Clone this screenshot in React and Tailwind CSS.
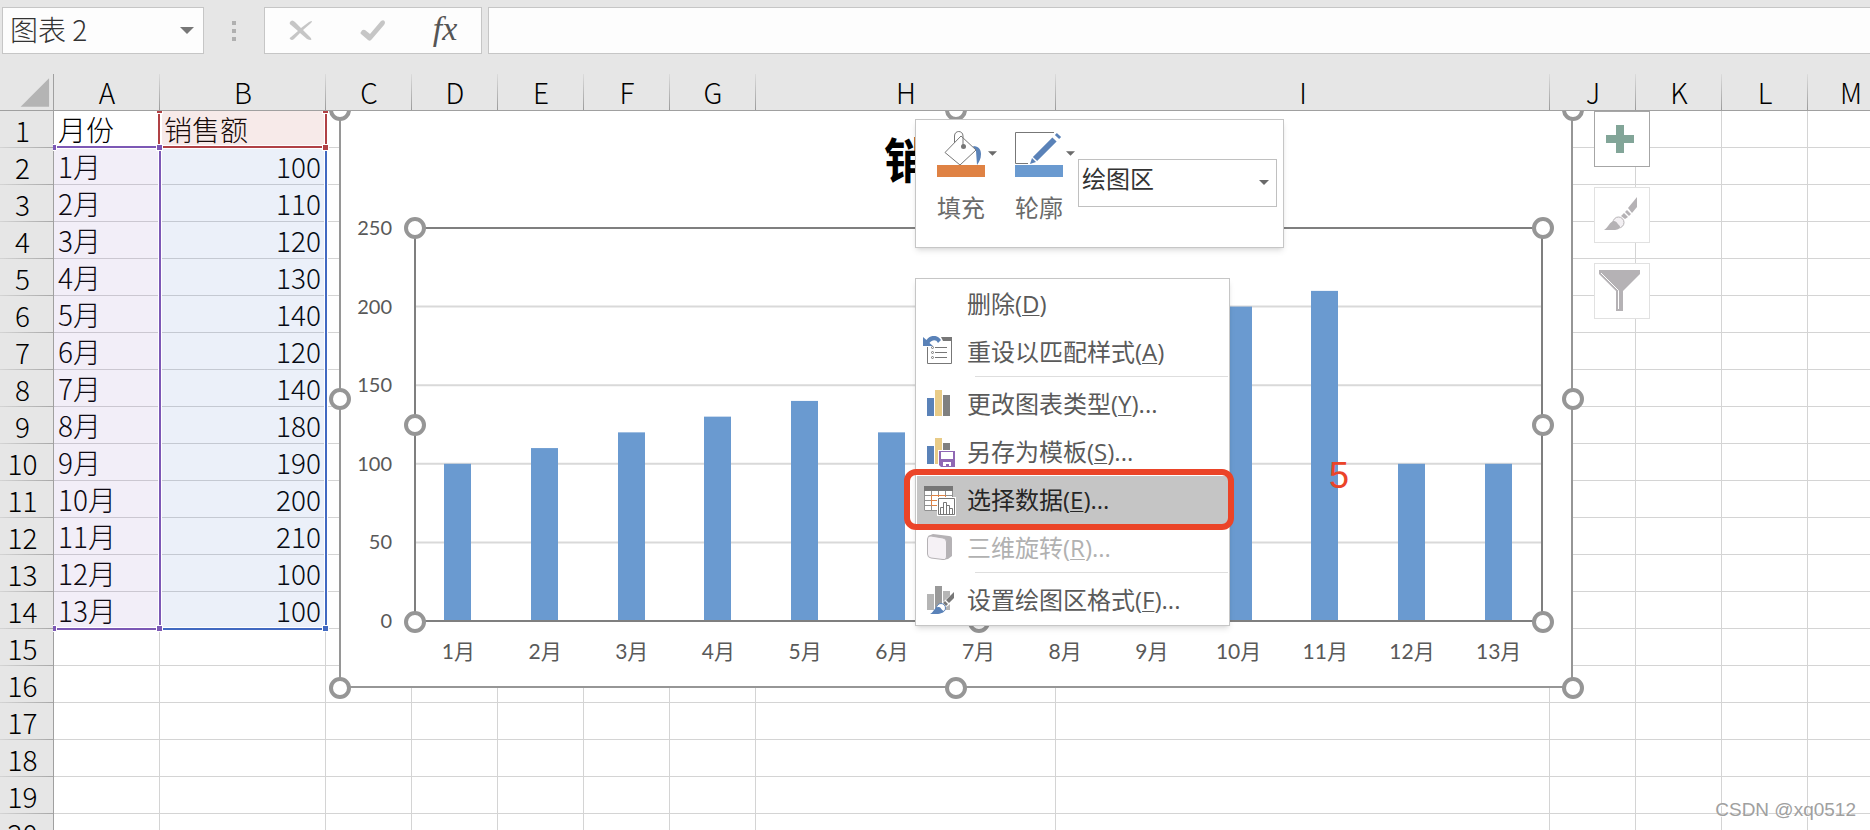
import React, { useState } from 'react';
import clsx from 'clsx';

const columns = [
  { name: 'A', width: 'min-w-[106px]' },
  { name: 'B', width: 'min-w-[166px]' },
  { name: 'C', width: 'min-w-[86px]' },
  { name: 'D', width: 'min-w-[86px]' },
  { name: 'E', width: 'min-w-[86px]' },
  { name: 'F', width: 'min-w-[86px]' },
  { name: 'G', width: 'min-w-[86px]' },
  { name: 'H', width: 'min-w-[300px]' },
  { name: 'I', width: 'min-w-[494px]' },
  { name: 'J', width: 'min-w-[86px]' },
  { name: 'K', width: 'min-w-[86px]' },
  { name: 'L', width: 'min-w-[86px]' },
  { name: 'M', width: 'min-w-[86px]' }
];

const sales = [100, 110, 120, 130, 140, 120, 140, 180, 190, 200, 210, 100, 100];

const rows = [
  ['月份', '销售额'],
  ...sales.map((value, i) => [`${i + 1}月`, value]),
  ...Array.from({ length: 6 }, () => ['', ''])
];

// Plot area in sheet coordinates
const plot = { left: 415, right: 1542, top: 228, bottom: 621, max: 250 };

const Caret = ({ className }) => (
  <svg viewBox="0 0 10 5" className={className} aria-hidden="true">
    <path d="M0 0H10L5 5Z" fill="currentColor" />
  </svg>
);

const FormulaBar = () => {
  const [name, setName] = useState('图表 2');
  const [formula, setFormula] = useState('');

  return (
    <div className="flex h-[74px] shrink-0 items-start pt-[7px] pl-[2px]">
      <div className="flex h-[47px] w-[202px] items-center border border-[#c6c6c6] bg-[#fdfdfd] pr-[9px] pl-[7px]">
        <input
          aria-label="名称框"
          value={name}
          onChange={(e) => setName(e.target.value)}
          className="h-full min-w-0 flex-1 bg-transparent pb-1 text-[28px] font-light text-[#333] outline-none"
        />
        <button type="button" aria-label="展开名称框" className="text-[#777]">
          <Caret className="h-[7px] w-[14px]" />
        </button>
      </div>

      <div className="flex h-[47px] w-[60px] flex-col items-center justify-center gap-1">
        <span className="size-1 bg-[#b0b0b0]" />
        <span className="size-1 bg-[#b0b0b0]" />
        <span className="size-1 bg-[#b0b0b0]" />
      </div>

      <div className="mr-[6px] flex h-[47px] w-[218px] border border-[#c6c6c6] bg-[#fdfdfd]">
        <button type="button" aria-label="取消" className="flex w-[72px] items-center justify-center">
          <svg viewBox="0 0 24 21" className="h-[21px] w-6">
            <path
              d="M1 2Q3-1 6 2L12 8L20 2Q22 1 23 1Q23 2 22 3L14 10L21 17Q23 19 22 20Q20 20 18 19L11 13L5 19Q3 21 1 19Q0 18 2 17L9 11L2 5Q0 4 1 2Z"
              fill="#c6c6c6"
            />
          </svg>
        </button>
        <button type="button" aria-label="输入" className="flex w-[72px] items-center justify-center">
          <svg viewBox="0 0 26 21" className="h-[21px] w-[26px]">
            <path
              d="M1 12Q2 9 5 10L10 14L21 1Q24-1 25 2Q25 4 24 5L12 19Q10 22 8 20L1 14Q0 13 1 12Z"
              fill="#c6c6c6"
            />
          </svg>
        </button>
        <button
          type="button"
          aria-label="插入函数"
          className="flex w-[72px] items-center justify-center pb-1 font-['Liberation_Serif',serif] text-[34px] leading-none text-[#555] italic"
        >
          fx
        </button>
      </div>

      <input
        aria-label="编辑栏"
        value={formula}
        onChange={(e) => setFormula(e.target.value)}
        className="h-[47px] min-w-0 flex-1 border border-r-0 border-[#c6c6c6] bg-[#fdfdfd] px-2 text-[28px] outline-none"
      />
    </div>
  );
};

const Grid = () => (
  <table className="w-max border-separate border-spacing-0 text-[28px] leading-[36px] font-light text-black">
    <thead>
      <tr className="h-[37px]">
        <th className="min-w-[54px] border-r border-b border-[#a0a0a0] bg-[#e6e6e6] p-0">
          <svg viewBox="0 0 54 36" className="block h-9 w-[53px]" aria-hidden="true">
            <path d="M50 4V33H21Z" fill="#b4b4b4" />
          </svg>
        </th>
        {columns.map((col) => (
          <th
            key={col.name}
            scope="col"
            className={clsx(
              'h-[37px] border-b border-[#a0a0a0] bg-[#e6e6e6] bg-[linear-gradient(to_bottom,#dcdcdc,#9b9b9b)] bg-[length:1px_100%] bg-right bg-no-repeat p-0 text-center font-light',
              col.width
            )}
          >
            {col.name}
          </th>
        ))}
      </tr>
    </thead>
    <tbody>
      {rows.map(([month, value], i) => (
        <tr key={i} className="h-[37px]">
          <th
            scope="row"
            className="h-[37px] border-r border-[#a0a0a0] bg-[#e6e6e6] bg-[linear-gradient(to_right,#d4d4d4,#a8a8a8)] bg-[length:100%_1px] bg-bottom bg-no-repeat p-0 pr-2 text-center font-light"
          >
            {i + 1}
          </th>
          {columns.map((col) => (
            <td
              key={col.name}
              className={clsx(
                'h-[37px] border-r border-b border-[#d4d4d4] bg-white p-0 px-1 whitespace-nowrap',
                col.name === 'B' && i > 0 && 'text-right'
              )}
            >
              {col.name === 'A' && month}
              {col.name === 'B' && value}
            </td>
          ))}
        </tr>
      ))}
    </tbody>
  </table>
);

const RangeHighlights = () => (
  <svg viewBox="0 111 340 530" className="absolute top-0 left-0 h-[530px] w-[340px]" aria-hidden="true">
    <rect x="54" y="148" width="105" height="480" fill="#7c5cb8" opacity="0.1" />
    <rect x="161" y="148" width="164" height="480" fill="#3f6fc4" opacity="0.1" />
    <rect x="161" y="111" width="164" height="36" fill="#c0504d" opacity="0.12" />

    {/* White halo under the range borders */}
    <path d="M54 147H326M54 629H326M160 111V629M326 111V629" stroke="#fff" strokeWidth="4" fill="none" />

    <path d="M160 147V629M326 147V629H160" stroke="#4169c1" strokeWidth="2" fill="none" />
    <path d="M159 111V147H326V111" stroke="#b04145" strokeWidth="2" fill="none" />
    <path d="M54 147H160V629H54" stroke="#7c58b5" strokeWidth="2" fill="none" />

    <g stroke="#fff" strokeWidth="1">
      <rect x="156.5" y="108.5" width="6" height="5" fill="#b04145" />
      <rect x="322.5" y="108.5" width="6" height="5" fill="#b04145" />
      <rect x="322.5" y="144.5" width="6" height="6" fill="#b04145" />
      <rect x="156.5" y="144.5" width="6" height="6" fill="#7c58b5" />
      <rect x="156.5" y="625.5" width="6" height="6" fill="#7c58b5" />
      <rect x="322.5" y="625.5" width="6" height="6" fill="#4169c1" />
      <path d="M53 144.5H56.5V150.5H53M53 625.5H56.5V631.5H53" fill="#7c58b5" />
    </g>
  </svg>
);

const Chart = () => {
  const { left, right, top, bottom, max } = plot;
  const slot = (right - left) / sales.length;
  const yOf = (value) => bottom - (value / max) * (bottom - top);

  const handles = [
    [340, 110], [956, 110], [1573, 110],
    [340, 399], [1573, 399],
    [340, 688], [956, 688], [1573, 688],
    [415, 228], [1543, 228],
    [415, 425], [1543, 425],
    [415, 622], [979, 622], [1543, 622]
  ];

  return (
    <svg
      viewBox="328 98 1258 602"
      className="absolute top-[-13px] left-[328px] h-[602px] w-[1258px] font-[Lato,'Noto_Sans_CJK_SC',sans-serif]"
      role="img"
      aria-label="销售额"
    >
      <rect x="340" y="98" width="1232" height="589" fill="#fff" stroke="#969696" strokeWidth="2" />

      <text x="956" y="178" textAnchor="middle" className="text-[48px] font-bold">
        销售额
      </text>

      {[50, 100, 150, 200].map((tick) => (
        <path key={tick} d={`M${left} ${yOf(tick)}H${right}`} stroke="#d9d9d9" strokeWidth="2" />
      ))}
      {[0, 50, 100, 150, 200, 250].map((tick) => (
        <text key={tick} x="392" y={yOf(tick) + 7} textAnchor="end" fill="#595959" className="text-[20px]">
          {tick}
        </text>
      ))}

      {sales.map((value, i) => (
        <React.Fragment key={i}>
          <rect
            x={Math.floor(left + slot * (i + 0.5) - 13.5)}
            y={yOf(value)}
            width="27"
            height={bottom - yOf(value)}
            fill="#6a9ad0"
          />
          <text x={left + slot * (i + 0.5)} y="659" textAnchor="middle" fill="#595959" className="text-[21px]">
            {i + 1}月
          </text>
        </React.Fragment>
      ))}

      <rect x={left} y={top} width={right - left} height={bottom - top} fill="none" stroke="#7f7f7f" strokeWidth="2" />

      {handles.map(([x, y]) => (
        <circle key={`${x}-${y}`} cx={x} cy={y} r="9" fill="#fff" stroke="#969696" strokeWidth="4" />
      ))}
    </svg>
  );
};

const ChartButtons = () => (
  <div className="absolute top-0 left-[1594px] flex flex-col gap-5">
    <button type="button" aria-label="图表元素" className="size-14 border border-[#a6a6a6] bg-white">
      <svg viewBox="1 1 54 54" className="size-full">
        <path d="M24 14H32V24H42V32H32V42H24V32H14V24H24Z" transform="translate(-2 0)" fill="#82a598" />
      </svg>
    </button>
    <button type="button" aria-label="图表样式" className="size-14 border border-[#e1e1e1] bg-white">
      <svg viewBox="1 1 54 54" className="size-full">
        <path d="M43 10V20L38 26L34 21Z" fill="#b5b2b5" />
        <path d="M33 23L37 27L35 29L31 25ZM30 26L34 30L31 32L27 29Z" fill="#b5b2b5" />
        <circle cx="24.5" cy="35.5" r="5.5" fill="#f3f0f3" stroke="#b5b2b5" />
        <path d="M10 43C14 41 16 34 20 34C23 34 24 38 26 39C26 42 23 43 20 43Z" fill="#b5b2b5" />
      </svg>
    </button>
    <button type="button" aria-label="图表筛选器" className="size-14 border border-[#e1e1e1] bg-white">
      <svg viewBox="1 1 54 54" className="size-full">
        <path d="M5 7H46V11L29 28V48H22V28L5 11Z" fill="#b5b2b5" />
        <path d="M7 10L24.5 27.5V46" fill="none" stroke="#fff" />
      </svg>
    </button>
  </div>
);

const FillIcon = () => (
  <svg viewBox="0 0 48 46" className="h-[46px] w-12">
    <path d="M36 15C42 15 44 19 44 23C44 28 42 31 40 34L39 20Z" fill="#5a82b8" />
    <path d="M8 21.5L24 5L39 19L23 34Z" fill="#fff" stroke="#777" />
    <path d="M17.5 12V5C17.5-1 26-1 26 5V15" fill="none" stroke="#777" />
    <circle cx="26.5" cy="15.5" r="2.5" fill="#777" />
    <path d="M0 34H48V46H0Z" fill="#df8244" />
  </svg>
);

const OutlineIcon = () => (
  <svg viewBox="0 0 48 46" className="h-[46px] w-12">
    <path d="M13 32.5H0.5V1.5H39" fill="none" stroke="#777" />
    <path d="M15 33L17 27L21 31Z" fill="#5a82b8" />
    <path d="M20 28L39.5 8.5M42 6L44 4" stroke="#5a82b8" strokeWidth="6" />
    <path d="M0 34H48V46H0Z" fill="#6a9ad0" />
  </svg>
);

const MiniToolbar = () => (
  <div className="absolute top-2 left-[915px] flex h-[129px] w-[369px] border border-[#c6c6c6] bg-white pt-[11px] pl-[21px] shadow-md">
    <button type="button" className="flex w-[78px] flex-col items-start text-[#6a6a6a]">
      <span className="flex">
        <FillIcon />
        <Caret className="mt-5 ml-[3px] h-[5px] w-[9px]" />
      </span>
      <span className="mt-[10px] text-[24px] leading-[40px]">填充</span>
    </button>
    <button type="button" className="flex w-[62px] flex-col items-start text-[#6a6a6a]">
      <span className="flex">
        <OutlineIcon />
        <Caret className="mt-5 ml-[3px] h-[5px] w-[9px]" />
      </span>
      <span className="mt-[10px] text-[24px] leading-[40px]">轮廓</span>
    </button>
    <div className="relative mt-7 ml-[1px] h-12 w-[199px]">
      <select
        aria-label="图表元素"
        defaultValue="plot"
        className="size-full appearance-none border border-[#c0c0c0] bg-white pb-[10px] pl-[3px] text-[24px] text-[#333] outline-none"
      >
        <option value="plot">绘图区</option>
        <option value="chart">图表区</option>
        <option value="title">图表标题</option>
      </select>
      <Caret className="pointer-events-none absolute top-[21px] right-2 h-[5px] w-[10px] text-[#6a6a6a]" />
    </div>
  </div>
);

const ResetIcon = () => (
  <>
    <path d="M5.5 11V27.5H29.5V1.5H20" fill="none" stroke="#777" />
    <path d="M19 1H30V5H21Z" fill="#777" />
    <path d="M13 11.5H25M13 16.5H25M13 21.5H25" stroke="#777" />
    <path d="M1 1V10H11L7.5 7C10 4 14 3 16 7L19 4C15-2 8-1 4.5 4Z" fill="#5a82b8" />
    <circle cx="10.5" cy="11.5" r="1" fill="none" stroke="#777" />
    <circle cx="10.5" cy="16.5" r="1" fill="none" stroke="#777" />
    <circle cx="10.5" cy="21.5" r="1" fill="none" stroke="#777" />
  </>
);

const ChartTypeIcon = () => (
  <>
    <path d="M5 10H12V28H5Z" fill="#5a82b8" />
    <path d="M13 2H20V28H13Z" fill="#e8cb87" />
    <path d="M21 7H28V28H21Z" fill="#808080" />
  </>
);

const TemplateIcon = () => (
  <>
    <ChartTypeIcon />
    <path d="M16 14H34V32H16Z" fill="#fff" />
    <path d="M17 15H33V31H19L17 29Z" fill="#9068b4" />
    <path d="M19 16H31V23H19ZM21 26H29V30H27V28H24V30H21Z" fill="#fff" />
  </>
);

const SelectDataIcon = () => (
  <>
    <path d="M2 2H31V27H2Z" fill="#fff" />
    <path d="M2.5 7V26.5H30.5V7M2 11.5H31M2 16.5H31M2 21.5H31M9.5 7V26M16.5 7V26M23.5 7V26" fill="none" stroke="#909090" />
    <path d="M9.5 11.5H23.5V21.5H9.5ZM16.5 11.5V21.5M9.5 16.5H23.5" fill="none" stroke="#df8244" />
    <path d="M2 2H31V7H2Z" fill="#777" />
    <path d="M15 13H34V32H15Z" fill="#fff" />
    <path d="M16.5 14.5H32.5V30.5H16.5Z" fill="#fff" stroke="#777" />
    <path d="M18.5 30V23.5H21.5V30M21.5 30V18.5H24.5V30M24.5 30V21.5H27.5V30M27.5 30V24.5H30.5V30" fill="none" stroke="#777" />
  </>
);

const RotateIcon = () => (
  <>
    <path d="M6 4L11 2L27 4Q30 4 30 7V24L26 27L20 28Z" fill="#b5b2b5" />
    <path d="M5.5 7Q5.5 3.5 9 4L21 6Q24.5 6.5 24.5 10V24Q24.5 28 21 27.5L9 26Q5.5 25.5 5.5 22Z" fill="#f5f1f5" stroke="#b5b2b5" />
  </>
);

const FormatIcon = () => (
  <>
    <path d="M5 10H12V26H5Z" fill="#b5b5b5" />
    <path d="M13 2H20V26H13Z" fill="#999" />
    <path d="M21 7H28V26H21Z" fill="#b5b5b5" />
    <path d="M33 7V15L27 21L21 25L20 19Z" fill="#fff" />
    <path d="M32 8V14L27 19L24 16ZM23 17L26 20L24 22L21 19Z" fill="#777" />
    <circle cx="19" cy="24" r="4.5" fill="#fff" stroke="#5a82b8" />
    <path d="M8 30C12 28 13 22 17 23C19 23 19 26 22 27C20 29 18 30 16 30Z" fill="#5a82b8" />
  </>
);

const menuItems = [
  { label: '删除', hotkey: 'D' },
  { label: '重设以匹配样式', hotkey: 'A', Icon: ResetIcon },
  { divider: true },
  { label: '更改图表类型', hotkey: 'Y', more: true, Icon: ChartTypeIcon },
  { label: '另存为模板', hotkey: 'S', more: true, Icon: TemplateIcon },
  { label: '选择数据', hotkey: 'E', more: true, Icon: SelectDataIcon, active: true },
  { label: '三维旋转', hotkey: 'R', more: true, Icon: RotateIcon, disabled: true },
  { divider: true },
  { label: '设置绘图区格式', hotkey: 'F', more: true, Icon: FormatIcon }
];

const ContextMenu = () => (
  <div
    role="menu"
    className="absolute top-[167px] left-[915px] w-[315px] border border-[#c6c6c6] bg-white p-px font-['Open_Sans','Noto_Sans_CJK_SC',sans-serif] shadow-md"
  >
    {menuItems.map((item, i) =>
      item.divider ? (
        <div key={i} className="ml-[58px] h-1 border-t border-[#dedede]" />
      ) : (
        <button
          key={i}
          type="button"
          role="menuitem"
          disabled={item.disabled}
          className={clsx(
            'flex h-12 w-full items-center pl-[5px] text-left text-[24px] whitespace-nowrap',
            item.active && 'bg-[#c5c5c5] text-[#262626]',
            item.disabled && 'text-[#b1b1b1]',
            !item.active && !item.disabled && 'text-[#5a5a5a]'
          )}
        >
          <svg viewBox="0 0 34 32" className="mr-[11px] h-8 w-[34px]" aria-hidden="true">
            {item.Icon && <item.Icon />}
          </svg>
          <span>
            {item.label}(<span className="underline decoration-1 underline-offset-2">{item.hotkey}</span>)
            {item.more && '...'}
          </span>
        </button>
      )
    )}
  </div>
);

export default function App() {
  return (
    <div className="flex h-screen flex-col overflow-hidden bg-[#e6e6e6] font-['Noto_Sans_CJK_SC',sans-serif]">
      <FormulaBar />
      <main className="relative min-h-0 flex-1">
        <Grid />

        {/* Floating objects, clipped below the column headers */}
        <div className="absolute inset-x-0 top-[37px] bottom-0 overflow-hidden">
          <RangeHighlights />
          <Chart />
          <ChartButtons />
          <MiniToolbar />
          <ContextMenu />

          <div className="pointer-events-none absolute top-[358px] left-[904px] h-[61px] w-[330px] rounded-xl border-6 border-[#eb4428]" />
          <span className="absolute top-[338px] left-[1329px] font-['Liberation_Sans',sans-serif] text-[36px] text-[#eb4428]">
            5
          </span>
          <span className="absolute right-[14px] bottom-[6px] font-['Liberation_Sans',sans-serif] text-[19px] leading-[28px] text-[#a0a0a0] [text-shadow:1px_1px_0_#fff]">
            CSDN @xq0512
          </span>
        </div>
      </main>
    </div>
  );
}
